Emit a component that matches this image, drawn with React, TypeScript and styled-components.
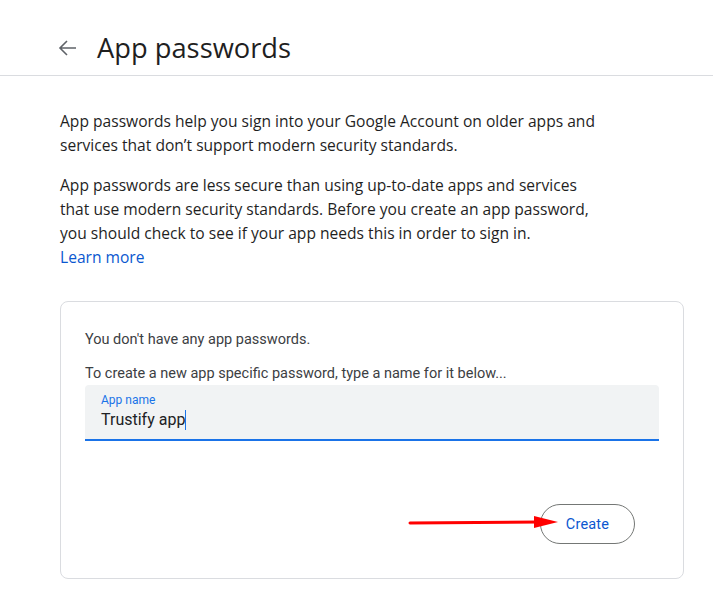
import React from "react";
import styled, { createGlobalStyle } from "styled-components";

const GlobalStyle = createGlobalStyle`
  body {
    margin: 0;
    background: #fff;
    font-family: "Open Sans", Roboto, Arial, sans-serif;
    color: #1f1f1f;
  }
`;

const Page = styled.div`
  width: 713px;
  height: 611px;
  overflow: hidden;
`;

const Header = styled.header`
  display: flex;
  align-items: center;
  gap: 18px;
  height: 76px;
  padding: 20px 0 0 57px;
  border-bottom: 1px solid #dadce0;
  box-sizing: border-box;
`;

const BackButton = styled.button`
  display: flex;
  align-items: center;
  justify-content: center;
  width: 22px;
  height: 22px;
  padding: 0;
  border: none;
  background: none;
  color: #5f6368;
`;

const Title = styled.h1`
  margin: 0;
  font-size: 27.3px;
  font-weight: 400;
  color: #1f1f1f;
`;

const Body = styled.main`
  padding: 33px 29px 0 60px;
`;

const Paragraph = styled.p`
  margin: 0 0 16px;
  max-width: 540px;
  font-size: 15.6px;
  line-height: 24px;
  color: #1f1f1f;
`;

const Link = styled.a`
  color: #0b57d0;
  text-decoration: none;
`;

const Card = styled.section`
  margin-top: 32px;
  border: 1px solid #dadce0;
  border-radius: 8px;
  padding: 28px 24px 34px;
  font-family: Roboto, Arial, sans-serif;
`;

const CardText = styled.div<{ $gap?: number }>`
  font-size: 14.5px;
  line-height: 20px;
  color: #3c4043;
  margin-bottom: ${(p) => p.$gap ?? 0}px;
`;

const Field = styled.div`
  background: #f1f3f4;
  border-bottom: 2px solid #1a73e8;
  border-radius: 4px 4px 0 0;
  padding: 7px 16px 7px;
`;

const FieldLabel = styled.div`
  font-size: 12px;
  line-height: 16px;
  color: #1a73e8;
`;

const FieldValue = styled.div`
  display: flex;
  align-items: center;
  font-size: 16px;
  line-height: 24px;
  color: #202124;
`;

const Caret = styled.span`
  display: inline-block;
  width: 1px;
  height: 20px;
  background: #1a73e8;
`;

const Actions = styled.div`
  display: flex;
  justify-content: flex-end;
  align-items: center;
  margin-top: 63px;
  padding-right: 24px;
  position: relative;
`;

const CreateButton = styled.button`
  width: 95px;
  height: 40px;
  border: 1px solid #747775;
  border-radius: 20px;
  background: #fff;
  color: #0b57d0;
  font-family: Roboto, Arial, sans-serif;
  font-size: 14.5px;
  font-weight: 400;
  letter-spacing: 0.2px;
`;

const Arrow = styled.svg`
  position: absolute;
  left: 323px;
  top: 11px;
`;

export default function App() {
  return (
    <Page>
      <GlobalStyle />
      <Header>
        <BackButton aria-label="Back">
          <svg width="22" height="22" viewBox="0 0 22 22" fill="none" stroke="currentColor" strokeWidth="1.6">
            <path d="M19 11H3M10 4l-7 7 7 7" />
          </svg>
        </BackButton>
        <Title>App passwords</Title>
      </Header>
      <Body>
        <Paragraph>
          App passwords help you sign into your Google Account on older apps and
          services that don’t support modern security standards.
        </Paragraph>
        <Paragraph>
          App passwords are less secure than using up-to-date apps and services
          that use modern security standards. Before you create an app password,
          you should check to see if your app needs this in order to sign in.
          <br />
          <Link href="#">Learn more</Link>
        </Paragraph>
        <Card>
          <CardText $gap={14}>You don't have any app passwords.</CardText>
          <CardText $gap={1}>To create a new app specific password, type a name for it below...</CardText>
          <Field>
            <FieldLabel>App name</FieldLabel>
            <FieldValue>
              Trustify app
              <Caret />
            </FieldValue>
          </Field>
          <Actions>
            <Arrow width="160" height="16" viewBox="0 0 160 16">
              <line x1="2" y1="8" x2="132" y2="7" stroke="#f00" strokeWidth="3" strokeLinecap="round" />
              <polygon points="126,1 150,7 126,13" fill="#f00" />
            </Arrow>
            <CreateButton>Create</CreateButton>
          </Actions>
        </Card>
      </Body>
    </Page>
  );
}
